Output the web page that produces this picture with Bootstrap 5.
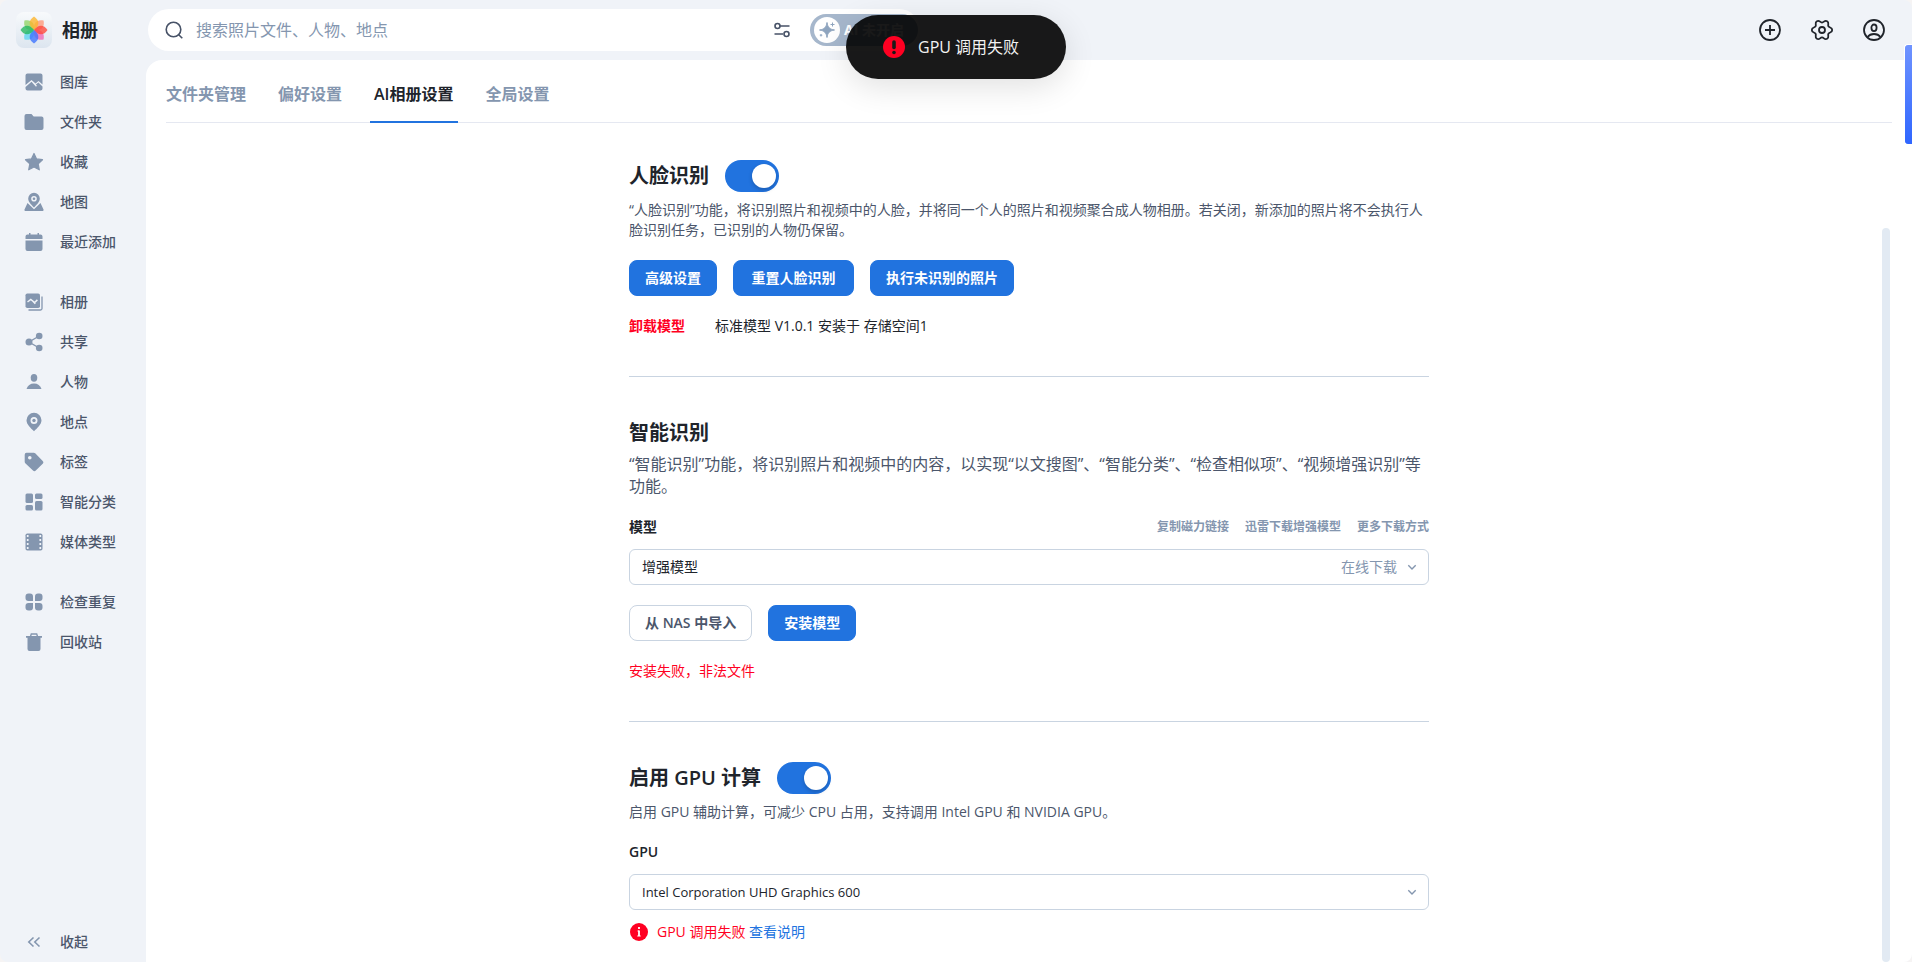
<!DOCTYPE html>
<html lang="zh-CN">
<head>
<meta charset="utf-8">
<meta name="viewport" content="width=device-width, initial-scale=1">
<title>相册</title>
<link rel="stylesheet" href="https://cdn.jsdelivr.net/npm/bootstrap@5.3.0/dist/css/bootstrap.min.css">
<style>
:root{--ink:#20242b;--body:#4b566b;--muted:#8496af;--line:#c9d4e1;--blue:#2173df;--red:#ff0022;--shell:#f0f3f8}
body{font-family:"Open Sans","Noto Sans CJK SC",sans-serif;font-size:14px;line-height:20px;color:var(--ink);background:#f6f4f4}
a{text-decoration:none}
.app{background:var(--shell);border-radius:8px;overflow:hidden}
.side{width:146px;color:var(--body)}
.brand{height:60px;padding-left:16px;gap:10px;font-size:18px;color:var(--ink)}
.side-link{height:40px;padding-left:24px;gap:16px;color:var(--body);font-weight:500;background:none;border:0}
.side-link svg{width:20px;height:20px;fill:var(--muted);flex:none}
.side-group{margin-bottom:20px}
.side-list{padding-top:2px}
.topbar{height:60px;padding:0 26px 0 2px}
.search{height:42px;width:772px;border-radius:21px;background:#fff;padding:0 2px 0 16px;gap:12px}
.search input{border:0;outline:0;background:none;font-size:16px;line-height:24px;padding:0;color:var(--ink)}
.search input::placeholder{color:var(--muted);opacity:1}
.bare{border:0;background:none;padding:0;line-height:0}
.ai-pill{height:32px;width:108px;border:0;border-radius:16px;background:#a6b7cc;color:#fff;padding:0 4px;gap:4px;margin-left:6px}
.tools{gap:28px}
.sheet{background:#fff;border-top-left-radius:16px}
.tabs{margin:0 20px;height:63px;gap:32px;border-bottom:1px solid #e5e8f1;padding-top:4px}
.tabs a{font-size:16px;color:var(--muted);font-weight:600;line-height:60px;height:59px;position:relative}
.tabs a.on{color:var(--ink)}
.tabs a.on::after{content:"";position:absolute;left:-4px;right:-4px;bottom:0;height:2px;background:var(--blue)}
.panel{max-width:800px;padding-top:37px}
.block{padding-bottom:40px;border-bottom:1px solid var(--line);margin-bottom:40px}
.block:last-child{border:0;margin:0;padding-bottom:20px}
.head{min-height:32px;gap:16px;margin-bottom:8px}
.head h2,.head label{font-size:20px;font-weight:600;line-height:32px;margin:0}
.toggle.form-check-input{width:54px;height:32px;margin:0;border:0;border-radius:16px;background-color:var(--blue);background-image:none;position:relative}
.toggle::after{content:"";position:absolute;right:3px;top:4px;width:24px;height:24px;border-radius:50%;background:#fff;box-shadow:0 2px 4px rgba(0,0,0,.2)}
.note{color:var(--body);margin:0}
.note-lg{font-size:16px;line-height:22px}
.act{height:36px;border-radius:8px;padding:0 15px;font-size:14px;line-height:20px;font-weight:600}
.act-main{--bs-btn-bg:var(--blue);--bs-btn-border-color:var(--blue)}
.act-wide{min-width:121px}
.act-line{--bs-btn-border-color:var(--line);--bs-btn-color:var(--body)}
.model-row{gap:30px}
.red{color:var(--red)}
.blue{color:var(--blue)}
.field label{font-weight:600}
.links a{font-size:12px;font-weight:600;color:var(--muted)}
.pick{height:36px;border-radius:6px;border-color:var(--line);font-size:14px;line-height:20px;padding:0 40px 0 12px;color:var(--ink);background-size:10px 10px;background-position:right 11px center;background-image:url("data:image/svg+xml,%3Csvg xmlns='http://www.w3.org/2000/svg' viewBox='0 0 10 10'%3E%3Cpath d='M1.3 3.3 5 7l3.7-3.7' fill='none' stroke='%238496af' stroke-width='1.4'/%3E%3C/svg%3E")}
.pick-latin{font-size:13px}
.pick-hint{position:absolute;right:32px;top:8px;color:var(--muted);pointer-events:none}
.toast-pill{position:absolute;top:15px;left:50%;transform:translateX(-50%);width:220px;height:64px;border-radius:32px;background:rgba(0,0,0,.9);color:#f2f2f2;font-size:16px;gap:13px;padding-left:37px;box-shadow:0 8px 32px rgba(0,0,0,.12)}
.scroll-thumb{position:absolute;right:22px;top:228px;bottom:0;width:8px;border-radius:4px;background:#e2eaf3}
.edge-tab{position:absolute;right:0;top:44px;width:8px;height:101px;padding:0;border:1px solid #fff;border-right:0;border-radius:4px 0 0 4px;background:linear-gradient(#6f93ff,#2f66ff)}
</style>
</head>
<body>
<div class="app d-flex min-vh-100 position-relative">
  <nav class="side d-flex flex-column flex-shrink-0" aria-label="相册">
    <div class="brand d-flex align-items-center fw-bold">
      <svg width="36" height="36" viewBox="0 0 36 36" aria-hidden="true">
        <defs><linearGradient id="lg" x1="0" y1="0" x2="0" y2="1"><stop offset="0" stop-color="#f8fafc"/><stop offset="1" stop-color="#dce5ef"/></linearGradient>
        <path id="petal" d="M18 18C12 13.500 12.500 8 18 4.500C23.500 8 24 13.500 18 18Z"/></defs>
        <rect width="36" height="36" rx="8" fill="url(#lg)"/>
        <g fill-opacity=".8">
          <use href="#petal" fill="#ff9a7a" transform="rotate(45 18 18)"/>
          <use href="#petal" fill="#f06ab8" transform="rotate(135 18 18)"/>
          <use href="#petal" fill="#5fd6f0" transform="rotate(225 18 18)"/>
          <use href="#petal" fill="#94d468" transform="rotate(315 18 18)"/>
          <use href="#petal" fill="#fdb52e"/>
          <use href="#petal" fill="#ff4a3c" transform="rotate(90 18 18)"/>
          <use href="#petal" fill="#3f74ff" transform="rotate(180 18 18)"/>
          <use href="#petal" fill="#28b860" transform="rotate(270 18 18)"/>
        </g>
      </svg>
      <span>相册</span>
    </div>
    <div class="side-list side-group">
      <a class="side-link d-flex align-items-center" href="#"><svg viewBox="0 0 20 20"><path d="M3.500 1.500h13a2 2 0 0 1 2 2v9L14.500 9l-3 2.500L7.500 8l-6 5V3.500a2 2 0 0 1 2-2Z"/><path d="m1.500 15 6-5.300 4.500 5 .9-.9-1-1.200 2.500-2.200 4.100 4.200v1.900a2 2 0 0 1-2 2h-13a2 2 0 0 1-2-2Z"/></svg>图库</a>
      <a class="side-link d-flex align-items-center" href="#"><svg viewBox="0 0 20 20"><path d="M2.500 2h5l2.200 2.500h7.800a2 2 0 0 1 2 2v9.500a2 2 0 0 1-2 2h-15a2 2 0 0 1-2-2V4a2 2 0 0 1 2-2Z"/></svg>文件夹</a>
      <a class="side-link d-flex align-items-center" href="#"><svg viewBox="0 0 20 20"><path d="M10 1.500 12.600 6.900 18.500 7.700 14.200 11.800 15.300 17.800 10 15 4.700 17.800 5.800 11.800 1.500 7.700 7.400 6.900Z" stroke="#8496af" stroke-width="1.200" stroke-linejoin="round"/></svg>收藏</a>
      <a class="side-link d-flex align-items-center" href="#"><svg viewBox="0 0 20 20"><path fill-rule="evenodd" d="M10 .8a5.800 5.800 0 0 1 5.800 5.800c0 3.300-3 6.200-5.800 8.900-2.800-2.700-5.800-5.600-5.800-8.900A5.800 5.800 0 0 1 10 .8Zm0 3.200a2.800 2.800 0 1 0 0 5.600A2.800 2.800 0 0 0 10 4Z"/><circle cx="10" cy="6.800" r="1.300"/><path d="m3.500 11 6.500 6.300 6.500-6.300 3 6.500a1 1 0 0 1-1 1.500h-17a1 1 0 0 1-1-1.500Z"/></svg>地图</a>
      <a class="side-link d-flex align-items-center" href="#"><svg viewBox="0 0 20 20"><path d="M5 1h1.500v1.500h7V1H15v1.500h1.500a2 2 0 0 1 2 2V7h-17V4.500a2 2 0 0 1 2-2H5ZM1.500 8.500h17v8.500a2 2 0 0 1-2 2h-13a2 2 0 0 1-2-2Z"/></svg>最近添加</a>
    </div>
    <div class="side-group">
      <a class="side-link d-flex align-items-center" href="#"><svg viewBox="0 0 20 20"><rect x="1.500" y="1.500" width="14.500" height="14.500" rx="1.800"/><path d="m3.500 10 3.300-2.600 3.800 3.100 2.800-2.600M8.500 8.800l2.800 2.900" fill="none" stroke="#f0f3f8" stroke-width="1.500"/><path d="M18 4.500v12a1.500 1.500 0 0 1-1.500 1.500h-12" fill="none" stroke="#8496af" stroke-width="1.300"/></svg>相册</a>
      <a class="side-link d-flex align-items-center" href="#"><svg viewBox="0 0 20 20"><circle cx="5" cy="10" r="3.500"/><circle cx="15.200" cy="4" r="3.300"/><circle cx="15.200" cy="16" r="3.300"/><path d="M15.200 4 5 10l10.200 6" fill="none" stroke="#8496af" stroke-width="1.400"/></svg>共享</a>
      <a class="side-link d-flex align-items-center" href="#"><svg viewBox="0 0 20 20"><ellipse cx="10" cy="5.800" rx="3.300" ry="3.900"/><path d="M2.500 17c1-3.500 3.800-5.500 7.500-5.500s6.500 2 7.500 5.500Z"/></svg>人物</a>
      <a class="side-link d-flex align-items-center" href="#"><svg viewBox="0 0 20 20"><path fill-rule="evenodd" d="M10 .8a7.500 7.500 0 0 1 7.500 7.500c0 4.400-4.500 8-7.500 11-3-3-7.500-6.600-7.500-11A7.500 7.500 0 0 1 10 .8ZM10 5a3.500 3.500 0 1 0 0 7 3.500 3.500 0 0 0 0-7Z"/><circle cx="10" cy="8.500" r="1.700"/></svg>地点</a>
      <a class="side-link d-flex align-items-center" href="#"><svg viewBox="0 0 20 20"><path fill-rule="evenodd" d="M2.500.7h7.300a2 2 0 0 1 1.400.6l7.500 7.600a2 2 0 0 1 0 2.800l-6.900 6.900a2 2 0 0 1-2.800 0L1.300 11.200a2 2 0 0 1-.6-1.400V2.700a2 2 0 0 1 1.800-2ZM5.800 4a1.800 1.800 0 1 0 0 3.600 1.800 1.800 0 0 0 0-3.600Z"/></svg>标签</a>
      <a class="side-link d-flex align-items-center" href="#"><svg viewBox="0 0 20 20"><rect x="1.500" y="1.500" width="7.500" height="9.500" rx="1.500"/><rect x="11" y="1.500" width="7.500" height="5.500" rx="1.500"/><rect x="1.500" y="13" width="7.500" height="5.500" rx="1.500"/><rect x="11" y="9" width="7.500" height="9.500" rx="1.500"/></svg>智能分类</a>
      <a class="side-link d-flex align-items-center" href="#"><svg viewBox="0 0 20 20"><rect x="1.500" y="1.500" width="17" height="17" rx="1.800"/><path d="M3.700 3v15M16.300 3v15" stroke="#f0f3f8" stroke-width="1.700" stroke-dasharray="2 2" fill="none"/></svg>媒体类型</a>
    </div>
    <div>
      <a class="side-link d-flex align-items-center" href="#"><svg viewBox="0 0 20 20"><rect x="1.500" y="1.500" width="7.500" height="7.500" rx="3"/><rect x="11" y="1.500" width="7.500" height="7.500" rx="3"/><rect x="1.500" y="11" width="7.500" height="7.500" rx="3"/><rect x="11" y="11" width="7.500" height="7.500" rx="3"/><path d="M6 6h3v3H6ZM11 6h3v3h-3ZM6 11h3v3H6ZM11 11h3v3h-3Z"/></svg>检查重复</a>
      <a class="side-link d-flex align-items-center" href="#"><svg viewBox="0 0 20 20"><path d="M3.500 5h13v12a2 2 0 0 1-2 2h-9a2 2 0 0 1-2-2ZM2 4h16v1.700H2Z"/><path d="M6.500 4.500 7.300 2h5.400l.8 2.500" fill="none" stroke="#8496af" stroke-width="1.400"/></svg>回收站</a>
    </div>
    <button type="button" class="side-link d-flex align-items-center mt-auto"><svg viewBox="0 0 20 20"><path d="M9.500 5.500 4.800 10l4.700 4.500M15.500 5.500 10.800 10l4.700 4.500" fill="none" stroke="#8496af" stroke-width="1.600"/></svg>收起</button>
  </nav>

  <div class="d-flex flex-column flex-grow-1">
    <header class="topbar d-flex align-items-center justify-content-between">
      <form class="search d-flex align-items-center" role="search">
        <svg width="20" height="20" viewBox="0 0 20 20" fill="none" stroke="#475267" stroke-width="1.600" aria-hidden="true"><circle cx="9.500" cy="9.500" r="7.300"/><path d="m14.700 14.700 3.600 3.600"/></svg>
        <input class="flex-grow-1" type="text" aria-label="搜索" placeholder="搜索照片文件、人物、地点">
        <button type="button" class="bare" aria-label="筛选"><svg width="20" height="20" viewBox="0 0 20 20" fill="none" stroke="#475267" stroke-width="1.600"><circle cx="5.500" cy="6" r="2.500"/><path d="M8 6h9.500M2.500 14H11"/><circle cx="14.500" cy="14" r="2.500"/></svg></button>
        <button type="button" class="ai-pill d-flex align-items-center fw-bold text-nowrap flex-shrink-0"><svg width="26" height="26" viewBox="0 0 26 26" aria-hidden="true" class="flex-shrink-0"><circle cx="13" cy="13" r="13" fill="#fff"/><path d="M13 5.500c.8 5 2.500 6.700 7.500 7.500-5 .8-6.700 2.500-7.500 7.500-.8-5-2.500-6.700-7.500-7.500 5-.8 6.700-2.500 7.500-7.500ZM18.500 5.500v4M16.500 7.500h4M7 17v2.500M5.800 18.200h2.500" fill="#8fa5bf" stroke="#8fa5bf" stroke-width="1"/></svg>AI 未开启</button>
      </form>
      <div class="tools d-flex">
        <button type="button" class="bare" aria-label="添加"><svg width="24" height="24" viewBox="0 0 24 24" fill="none" stroke="#20242b" stroke-width="1.800"><circle cx="12" cy="12" r="10"/><path d="M12 7v10M7 12h10"/></svg></button>
        <button type="button" class="bare" aria-label="设置"><svg width="24" height="24" viewBox="0 0 24 24" fill="none" stroke="#20242b" stroke-width="1.800" stroke-linejoin="round"><circle cx="12" cy="12" r="3"/><path d="M22.200 12C22.200 15 19.400 14 18.400 15.700C17.400 17.400 19.700 19.300 17.100 20.800C14.500 22.300 14 19.400 12 19.400C10 19.400 9.500 22.300 6.900 20.800C4.300 19.300 6.600 17.400 5.600 15.700C4.600 14 1.800 15 1.800 12C1.800 9 4.600 10 5.600 8.300C6.600 6.600 4.300 4.700 6.900 3.200C9.500 1.700 10 4.600 12 4.600C14 4.600 14.500 1.700 17.100 3.200C19.700 4.700 17.400 6.600 18.400 8.300C19.400 10 22.200 9 22.200 12Z"/></svg></button>
        <button type="button" class="bare" aria-label="账户"><svg width="24" height="24" viewBox="0 0 24 24" fill="none" stroke="#20242b" stroke-width="1.800"><circle cx="12" cy="12" r="10"/><ellipse cx="12" cy="9.800" rx="2.600" ry="3.300"/><path d="M5.500 19c1.700-2.200 4-3 6.500-3s4.800.8 6.500 3"/></svg></button>
      </div>
    </header>

    <main class="sheet flex-grow-1">
      <div class="tabs d-flex">
        <a href="#">文件夹管理</a>
        <a href="#">偏好设置</a>
        <a href="#" class="on" aria-current="page">AI相册设置</a>
        <a href="#">全局设置</a>
      </div>
      <div class="panel mx-auto">
        <section class="block">
          <div class="head d-flex align-items-center">
            <label for="face">人脸识别</label>
            <input class="form-check-input toggle" type="checkbox" role="switch" id="face" checked>
          </div>
          <p class="note">“人脸识别”功能，将识别照片和视频中的人脸，并将同一个人的照片和视频聚合成人物相册。若关闭，新添加的照片将不会执行人脸识别任务，已识别的人物仍保留。</p>
          <div class="d-flex gap-3 my-3 py-1">
            <button type="button" class="btn btn-primary act act-main">高级设置</button>
            <button type="button" class="btn btn-primary act act-main act-wide">重置人脸识别</button>
            <button type="button" class="btn btn-primary act act-main">执行未识别的照片</button>
          </div>
          <div class="d-flex align-items-center model-row">
            <a href="#" class="red fw-bold">卸载模型</a>
            <span>标准模型 V1.0.1 安装于 存储空间1</span>
          </div>
        </section>

        <section class="block">
          <div class="head d-flex align-items-center mb-1"><h2>智能识别</h2></div>
          <p class="note note-lg">“智能识别”功能，将识别照片和视频中的内容，以实现“以文搜图”、“智能分类”、“检查相似项”、“视频增强识别”等功能。</p>
          <div class="field pt-3 mt-1">
            <div class="d-flex justify-content-between mb-2 pb-1">
              <label for="model">模型</label>
              <div class="links d-flex gap-3"><a href="#">复制磁力链接</a><a href="#">迅雷下载增强模型</a><a href="#">更多下载方式</a></div>
            </div>
            <div class="position-relative">
              <select class="form-select pick" id="model"><option>增强模型</option></select>
              <span class="pick-hint">在线下载</span>
            </div>
          </div>
          <div class="d-flex gap-3 my-3 py-1">
            <button type="button" class="btn act act-line">从 NAS 中导入</button>
            <button type="button" class="btn btn-primary act act-main">安装模型</button>
          </div>
          <div class="red">安装失败，非法文件</div>
        </section>

        <section class="block">
          <div class="head d-flex align-items-center">
            <label for="gpu-on">启用 GPU 计算</label>
            <input class="form-check-input toggle" type="checkbox" role="switch" id="gpu-on" checked>
          </div>
          <p class="note">启用 GPU 辅助计算，可减少 CPU 占用，支持调用 Intel GPU 和 NVIDIA GPU。</p>
          <div class="field pt-3 mt-1">
            <label class="d-block mb-2 pb-1" for="gpu">GPU</label>
            <select class="form-select pick pick-latin" id="gpu"><option>Intel Corporation UHD Graphics 600</option></select>
          </div>
          <div class="d-flex align-items-center mt-2 pt-1 red">
            <svg class="me-2" width="20" height="20" viewBox="0 0 20 20" aria-hidden="true"><circle cx="10" cy="10" r="9" fill="#ff0022"/><path d="M10 5v2M10 8.500V14" stroke="#fff" stroke-width="1.800"/><path d="M8.500 9H10M8.300 14h3.400" stroke="#fff"/></svg>
            <span>GPU 调用失败 <a href="#" class="blue">查看说明</a></span>
          </div>
        </section>
      </div>
    </main>
  </div>

  <div class="toast-pill d-flex align-items-center" role="alert">
    <svg width="22" height="22" viewBox="0 0 22 22" aria-hidden="true"><circle cx="11" cy="11" r="11" fill="#ff0022"/><path d="M11 6v5.500" stroke="#191919" stroke-width="3.600" stroke-linecap="round"/><circle cx="11" cy="16.500" r="1.800" fill="#191919"/></svg>
    <span class="text-nowrap">GPU 调用失败</span>
  </div>
  <div class="scroll-thumb"></div>
  <button type="button" class="edge-tab" aria-label="展开侧栏"></button>
</div>
<script src="https://cdn.jsdelivr.net/npm/bootstrap@5.3.0/dist/js/bootstrap.bundle.min.js"></script>
</body>
</html>
